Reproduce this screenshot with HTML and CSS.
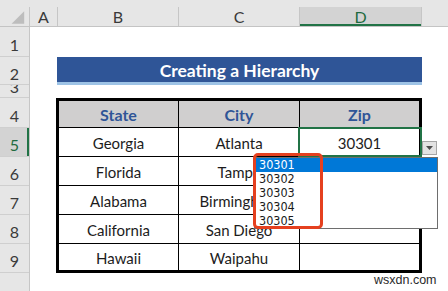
FILE: index.html
```html
<!DOCTYPE html>
<html>
<head>
<meta charset="utf-8">
<link rel="stylesheet" href="styles.css">
</head>
<body>
<div class="sheet">
  <div class="colheads">
    <div class="ch corner"><svg width="30" height="19" viewBox="0 0 30 19"><polygon points="12,17 25,17 25,4" fill="#bdbdbd"/></svg></div>
    <div class="ch col-a">A</div>
    <div class="ch col-b">B</div>
    <div class="ch col-c">C</div>
    <div class="ch col-d sel">D</div>
    <div class="ch col-e"></div>
  </div>
  <div class="body">
    <div class="rowheads">
      <div class="rh h30">1</div>
      <div class="rh h28">2</div>
      <div class="rh h13 clip"><span>3</span></div>
      <div class="rh h30">4</div>
      <div class="rh h29 sel">5</div>
      <div class="rh h29">6</div>
      <div class="rh h29">7</div>
      <div class="rh h29">8</div>
      <div class="rh h29">9</div>
      <div class="rh rest"></div>
    </div>
    <div class="cells">
      <div class="title">Creating a Hierarchy</div>
      <div class="table">
        <div class="th">State</div>
        <div class="th">City</div>
        <div class="th">Zip</div>
        <div class="td">Georgia</div>
        <div class="td">Atlanta</div>
        <div class="td active">30301</div>
        <div class="td">Florida</div>
        <div class="td">Tampa</div>
        <div class="td"></div>
        <div class="td">Alabama</div>
        <div class="td">Birmingham</div>
        <div class="td"></div>
        <div class="td">California</div>
        <div class="td">San Diego</div>
        <div class="td"></div>
        <div class="td last">Hawaii</div>
        <div class="td last">Waipahu</div>
        <div class="td last"></div>
      </div>
    </div>
  </div>

  <div class="ddbtn"><svg width="7" height="4" viewBox="0 0 7 4"><polygon points="0,0 7,0 3.5,4" fill="#4d4d4d"/></svg></div>
  <div class="ddlist">
    <div class="opt on">30301</div>
    <div class="opt">30302</div>
    <div class="opt">30303</div>
    <div class="opt">30304</div>
    <div class="opt">30305</div>
  </div>
  <div class="redbox"></div>
  <div class="watermark">wsxdn.com</div>
</div>
</body>
</html>
```
FILE: styles.css
```css
* { box-sizing: border-box; margin: 0; padding: 0; }
html, body { width: 448px; height: 291px; overflow: hidden; background: #fff; }
body { font-family: Lato, "Liberation Sans", sans-serif; color: #222; }

.sheet { position: relative; width: 448px; height: 291px; }

/* column header bar */
.colheads {
  display: flex;
  height: 27px;
  padding-top: 7px;
  background: #e6e6e6;
  border-bottom: 1px solid #c4c4c4;
}
.ch {
  height: 19px;
  border-right: 1px solid #c6c6c6;
  display: flex;
  align-items: center;
  justify-content: center;
  font-size: 16px;
  color: #3a3a3a;
  flex: none;
}
.corner { width: 30px; border-right-color: #c6c6c6; }
.corner svg { display: block; }
.col-a { width: 28px; }
.col-b { width: 121px; }
.col-c { width: 121px; }
.col-d { width: 122px; }
.col-e { flex: 1; border-right: none; }
.ch.sel {
  background: #d3d3d3;
  color: #1e6b40;
  box-shadow: inset 0 -2px 0 #217346;
}

/* body */
.body { display: flex; height: 264px; }
.rowheads {
  width: 30px;
  flex: none;
  display: flex;
  flex-direction: column;
  background: #e6e6e6;
  border-right: 1px solid #c6c6c6;
}
.rh {
  border-bottom: 1px solid #cfcfcf;
  display: flex;
  align-items: center;
  justify-content: center;
  padding-top: 5px;
  font-size: 16px;
  color: #3a3a3a;
  flex: none;
}
.h30 { height: 30px; }
.h28 { height: 28px; }
.h13 { height: 13px; }
.h29 { height: 29px; }
.rest { flex: 1; border-bottom: none; }
.rh.clip { overflow: hidden; padding-top: 0; align-items: flex-start; }
.rh.clip span { display: block; line-height: 13px; margin-top: -5px; }
.rh.sel {
  background: #d3d3d3;
  color: #1e6b40;
  box-shadow: inset -2px 0 0 #217346;
}

.cells {
  flex: 1;
  display: grid;
  grid-template-columns: 28px 121px 121px 122px 1fr;
  grid-template-rows: 30px 28px 13px 30px 29px 29px 29px 29px 29px 1fr;
}

.title {
  grid-column: 2 / 5;
  grid-row: 2;
  margin-left: -1px;
  background: #2f5597;
  border-bottom: 3px solid #9dc3e6;
  color: #fff;
  font-weight: 700;
  font-size: 17.5px;
  display: flex;
  align-items: center;
  justify-content: center;
  padding-top: 1px;
}

.table {
  grid-column: 2 / 5;
  grid-row: 4 / 10;
  margin-left: -2px;
  border: 3px solid #000;
  display: grid;
  grid-template-columns: 120px 121px 119px;
  grid-template-rows: 27px 29px 29px 29px 29px 26px;
}
.th, .td {
  display: flex;
  align-items: center;
  justify-content: center;
  border-right: 1px solid #000;
  border-bottom: 1px solid #000;
  font-size: 15px;
  position: relative;
}
.th:nth-child(3n), .td:nth-child(3n) { border-right: none; }
.td.last { border-bottom: none; }
.th {
  background: #d0cfcf;
  color: #2f5597;
  font-weight: 700;
  font-size: 16px;
  padding-top: 1px;
}
.td { color: #1c1c1c; padding-top: 2px; }
.td.active::after {
  content: "";
  position: absolute;
  left: -2px;
  top: -1px;
  right: -3px;
  bottom: -1px;
  border: 2px solid #217346;
}

/* data validation dropdown */
.ddbtn {
  position: absolute;
  left: 422px;
  top: 141px;
  width: 15px;
  height: 14px;
  background: #e3e3e3;
  border: 1px solid #a6a6a6;
  display: flex;
  align-items: center;
  justify-content: center;
}
.ddbtn svg { display: block; }
.ddlist {
  position: absolute;
  left: 254px;
  top: 157px;
  width: 184px;
  height: 72px;
  background: #fff;
  border: 1px solid #6e6e6e;
}
.opt {
  height: 14px;
  line-height: 14px;
  padding-left: 4px;
  font-family: "Liberation Sans Narrow", "DejaVu Sans Condensed", "Liberation Sans", sans-serif;
  font-size: 12.5px;
  color: #1a1a1a;
}
.opt.on { background: #0078d7; color: #fff; }

.redbox {
  position: absolute;
  left: 253px;
  top: 153px;
  width: 70px;
  height: 76px;
  border: 3px solid #e5401f;
  border-radius: 5px;
}

.watermark {
  position: absolute;
  left: 374px;
  top: 273px;
  font-family: "Liberation Sans", sans-serif;
  font-size: 12.5px;
  color: #2a2a2a;
  background: #fff;
  line-height: 14px;
}
```
